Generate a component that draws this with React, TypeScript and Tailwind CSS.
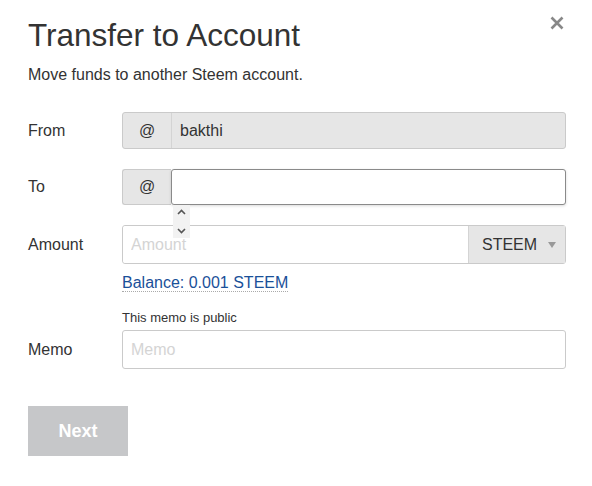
import React from "react";

const Label = ({ children }: { children: React.ReactNode }) => (
  <div className="w-[94px] shrink-0 text-[16px] text-[#333]">{children}</div>
);

export default function App() {
  return (
    <div
      className="relative w-[592px] h-[486px] bg-white pl-[28px] pr-[26px] pt-[14px] text-[#333]"
      style={{ fontFamily: '"Liberation Sans", Arial, sans-serif' }}
    >
      <button className="absolute right-[28px] top-[16px] leading-none">
        <svg width="14" height="14" viewBox="0 0 14 14">
          <path d="M1.5 1.5 L12.5 12.5 M12.5 1.5 L1.5 12.5" stroke="#888" strokeWidth="2.6" />
        </svg>
      </button>

      <h1 className="text-[31.5px] leading-[42px] text-[#333]">Transfer to Account</h1>
      <p className="mt-[9px] text-[16px] leading-[20px] text-[#333]">Move funds to another Steem account.</p>

      {/* From */}
      <div className="mt-[27px] flex items-center">
        <Label>From</Label>
        <div className="flex flex-1 h-[37px] border border-[#cacaca] rounded-[3px] bg-[#e6e6e6]">
          <div className="w-[49px] flex items-center justify-center border-r border-[#d4d4d4] text-[16px]">@</div>
          <div className="flex-1 flex items-center px-[8px] text-[16px]">bakthi</div>
        </div>
      </div>

      {/* To */}
      <div className="mt-[20px] flex items-center">
        <Label>To</Label>
        <div className="relative flex flex-1 h-[36px]">
          <div className="w-[49px] flex items-center justify-center border border-r-0 border-[#cacaca] rounded-l-[3px] bg-[#e6e6e6] text-[16px]">@</div>
          <input className="flex-1 min-w-0 border border-[#8a8a8a] rounded-[3px] bg-white px-[8px] text-[16px] outline-none shadow-[0_1px_3px_rgba(0,0,0,0.15)]" />
          <div className="absolute left-[51px] top-[36px] z-10 w-[17px] h-[33px] bg-[#f2f2f2] flex flex-col items-center justify-between py-[4px]">
            <svg width="9" height="6" viewBox="0 0 9 6">
              <path d="M1 5 L4.5 1.5 L8 5" stroke="#555" strokeWidth="1.6" fill="none" />
            </svg>
            <svg width="9" height="6" viewBox="0 0 9 6">
              <path d="M1 1 L4.5 4.5 L8 1" stroke="#555" strokeWidth="1.6" fill="none" />
            </svg>
          </div>
        </div>
      </div>

      {/* Amount */}
      <div className="mt-[20px] flex items-center">
        <Label>Amount</Label>
        <div className="flex flex-1 h-[39px] border border-[#cacaca] rounded-[3px]">
          <input
            placeholder="Amount"
            className="flex-1 min-w-0 px-[8px] text-[16px] outline-none placeholder:text-[#d4d4d4] bg-white rounded-l-[3px]"
          />
          <div className="w-[97px] flex items-center justify-between pl-[13px] pr-[9px] bg-[#e6e6e6] border-l border-[#d4d4d4] text-[16px]">
            <span>STEEM</span>
            <svg width="8" height="6" viewBox="0 0 8 6">
              <path d="M0 0 L8 0 L4 6 Z" fill="#999" />
            </svg>
          </div>
        </div>
      </div>

      <div className="ml-[94px] mt-[9px] text-[16px] leading-[20px]">
        <span className="text-[#1a5099] border-b border-dotted border-[#aaa]">Balance: 0.001 STEEM</span>
      </div>

      {/* Memo */}
      <div className="ml-[94px] mt-[17px] text-[13px] leading-[16px] text-[#333]">This memo is public</div>
      <div className="mt-[4px] flex items-center">
        <Label>Memo</Label>
        <input
          placeholder="Memo"
          className="flex-1 min-w-0 h-[39px] border border-[#cacaca] rounded-[3px] px-[8px] text-[16px] outline-none placeholder:text-[#d4d4d4]"
        />
      </div>

      <button className="mt-[37px] w-[100px] h-[50px] bg-[#c6c7c9] text-white text-[18px] font-bold">Next</button>
    </div>
  );
}
